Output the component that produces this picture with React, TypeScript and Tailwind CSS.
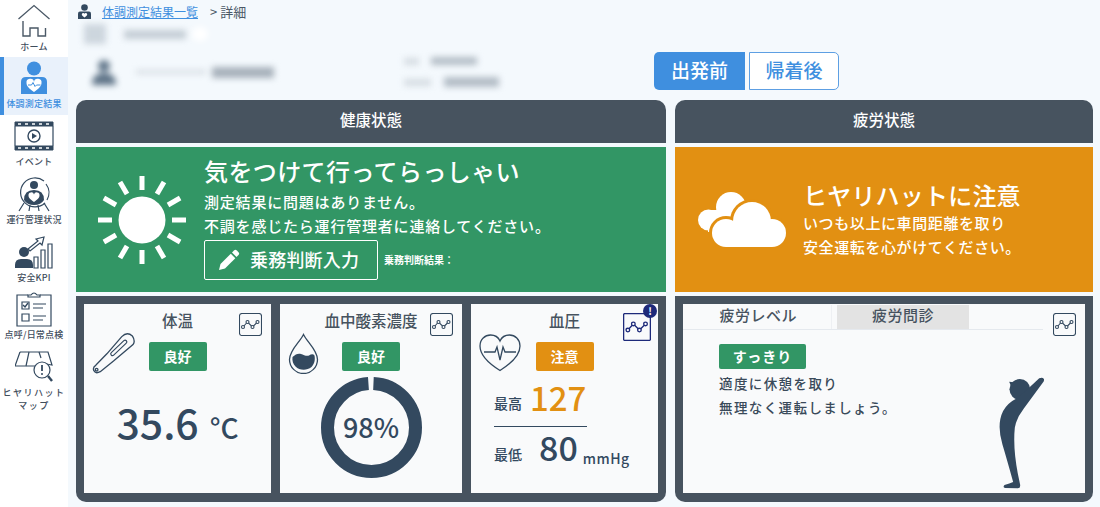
import React from 'react';

const font = { fontFamily: '"Noto Sans CJK JP", "Noto Sans", sans-serif' };

function HomeIcon() {
  return (
    <svg width="34" height="34" viewBox="0 0 34 34" fill="none" stroke="#4a5866" strokeWidth="1.3">
      <path d="M1.500 15 17 1.500 32.500 15" />
      <path d="M6 17v15h7v-8h8v8h7.500v-8" strokeWidth="1.400" />
    </svg>
  );
}

function HealthIcon() {
  return (
    <svg width="28" height="34" viewBox="0 0 28 34">
      <circle cx="14" cy="7.500" r="7" fill="#3f8fdf" />
      <path d="M1 33V21q0-5 5-5h16q5 0 5 5v12z" fill="#3f8fdf" />
      <path d="M14 31c-5-3.500-7.500-6-7.500-9a3.700 3.700 0 0 1 7.500-1 3.700 3.700 0 0 1 7.500 1c0 3-2.500 5.500-7.500 9z" fill="#fff" />
      <path d="M8 24h3.500l1.500-2.500 2 4 1.500-1.500h4" fill="none" stroke="#3f8fdf" strokeWidth="1" />
    </svg>
  );
}

function EventIcon() {
  return (
    <svg width="40" height="30" viewBox="0 0 40 30" fill="none" stroke="#33495f">
      <path d="M1 1h38v4H1zM1 25h38v4H1z" fill="#33495f" />
      <path d="M4 3h3M11 3h3M18 3h3M25 3h3M32 3h3M4 27h3M11 27h3M18 27h3M25 27h3M32 27h3" stroke="#fff" strokeWidth="1.600" />
      <path d="M1 5v20M39 5v20" strokeWidth="1.200" />
      <circle cx="20" cy="15" r="6" strokeWidth="1.400" />
      <path d="M18 12l5 3-5 3z" fill="#33495f" stroke="none" />
    </svg>
  );
}

function OperationIcon() {
  return (
    <svg width="36" height="36" viewBox="0 0 36 36" fill="none" stroke="#33495f">
      <path d="M28 5a14.500 14.500 0 1 0 1 22" strokeWidth="1.200" />
      <path d="M30 8a14.500 14.500 0 0 1 1 16" strokeWidth="1.200" />
      <circle cx="18" cy="9" r="4" fill="#33495f" stroke="none" />
      <path d="M8 24q0-10 10-10t10 10q-3 5-10 5t-10-5z" fill="#33495f" stroke="none" />
      <path d="M18 26c-4-3-5.500-4.500-5.500-6.500a2.800 2.800 0 0 1 5.500-1 2.800 2.800 0 0 1 5.500 1c0 2-1.500 3.500-5.500 6.500z" fill="#fff" stroke="none" />
      <path d="M3 35l5-8M33 35l-5-8M13 35l1-6M23 35l-1-6" strokeWidth="1.200" />
    </svg>
  );
}

function KpiIcon() {
  return (
    <svg width="38" height="34" viewBox="0 0 38 34" fill="none" stroke="#33495f" strokeWidth="1.200">
      <circle cx="9" cy="17" r="5" fill="#33495f" stroke="none" />
      <path d="M0 33v-3q0-6 6-6h6q6 0 6 6v3z" fill="#33495f" stroke="none" />
      <path d="M19 22h4v11h-4zM26 15h4v18h-4zM33 9h4v24h-4z" />
      <path d="M13 14l10-8-2-2 8-2-2 8-2-2-10 8z" />
    </svg>
  );
}

function CheckIcon() {
  return (
    <svg width="36" height="36" viewBox="0 0 36 36" fill="none" stroke="#33495f" strokeWidth="1.200">
      <path d="M12 4H1v31h34V4H24" />
      <path d="M12 6V4h3q3-4 6 0h3v2z" />
      <path d="M6 11h7v7H6zM6 23h7v7H6z" />
      <path d="M7 14l2 2 3-4" strokeWidth="1.400" />
      <path d="M17 13h13M17 17h10M17 25h13M17 29h10" />
    </svg>
  );
}

function MapIcon() {
  return (
    <svg width="38" height="32" viewBox="0 0 38 32" fill="none" stroke="#33495f" strokeWidth="1.200">
      <path d="M5 1h28l4 13-6-1M21 15H0L5 1" />
      <path d="M14 1l-3 14M24 1l2 6" />
      <circle cx="27" cy="19" r="8" fill="#fff" />
      <path d="M27 14v6" strokeWidth="1.800" />
      <circle cx="27" cy="23" r="1" fill="#33495f" stroke="none" />
      <path d="M33 25l4 5" strokeWidth="2.400" />
    </svg>
  );
}

function SideItem({ icon, label, active, className }: { icon: React.ReactNode; label: React.ReactNode; active?: boolean; className: string }) {
  return (
    <div className={`flex flex-col items-center ${className} ${active ? 'bg-[#e9f1fb] border-l-4 border-[#3f8fdf] pr-1' : ''}`}>
      <div className="flex h-[36px] items-center justify-center">{icon}</div>
      <div className={`mt-[1px] text-center text-[9px] font-medium leading-[13px] tracking-[0.2px] ${active ? 'text-[#3f8fdf]' : 'text-[#3f4d5c]'}`}>{label}</div>
    </div>
  );
}

function Sidebar() {
  return (
    <aside className="flex w-[68px] shrink-0 flex-col bg-white">
      <SideItem className="h-[57px] pt-[3px]" icon={<HomeIcon />} label="ホーム" />
      <SideItem className="h-[58px] pt-[3px]" active icon={<HealthIcon />} label="体調測定結果" />
      <SideItem className="h-[55px] pt-[3px]" icon={<EventIcon />} label="イベント" />
      <SideItem className="h-[58px] pt-[6px]" icon={<OperationIcon />} label="運行管理状況" />
      <SideItem className="h-[58px] pt-[6px]" icon={<KpiIcon />} label="安全KPI" />
      <SideItem className="h-[58px] pt-[5px]" icon={<CheckIcon />} label="点呼/日常点検" />
      <SideItem className="h-[70px] pt-[5px]" icon={<MapIcon />} label={<span className="tracking-[1.5px]">ヒヤリハット<br />マップ</span>} />
    </aside>
  );
}

function BlurredInfo() {
  return (
    <div className="mt-[2px] blur-[3px]">
      <div className="flex items-center">
        <div className="ml-[8px] h-[20px] w-[22px] bg-[#cdd6de]" />
        <div className="ml-[18px] h-[9px] w-[62px] bg-[#c4cdd5]" />
        <div className="ml-[6px] h-[14px] w-[16px] rounded-full bg-white" />
      </div>
      <div className="mt-[13px] flex items-center">
        <svg className="ml-[14px]" width="28" height="28" viewBox="0 0 28 28">
          <circle cx="14" cy="8" r="6" fill="#5f7488" />
          <path d="M2 27q0-12 12-12t12 12z" fill="#5f7488" />
        </svg>
        <div className="ml-[18px] h-[4px] w-[70px] bg-[#d5dce2]" />
        <div className="ml-[6px] h-[11px] w-[62px] bg-[#a7b1bb]" />
        <div className="ml-[130px] flex flex-col gap-[12px]">
          <div className="flex items-center gap-[12px]">
            <div className="h-[7px] w-[15px] bg-[#d5dce2]" />
            <div className="h-[8px] w-[46px] bg-[#b3bdc6]" />
          </div>
          <div className="flex items-center gap-[13px]">
            <div className="h-[7px] w-[27px] bg-[#d5dce2]" />
            <div className="h-[10px] w-[55px] bg-[#b3bdc6]" />
          </div>
        </div>
      </div>
    </div>
  );
}

function TopBar() {
  return (
    <div className="flex h-[100px] shrink-0">
      <div className="w-[578px] shrink-0">
        <div className="flex h-[22px] items-center pt-[1px] pl-[2px] text-[12px]">
          <svg className="-mt-[1px]" width="13" height="15" viewBox="0 0 13 15">
            <circle cx="6.500" cy="3.500" r="3.300" fill="#33495f" />
            <path d="M0 15V9.500q0-2 2-2h9q2 0 2 2V15z" fill="#33495f" />
            <path d="M6.500 13.500c-2-1.500-2.700-2.300-2.700-3.300a1.400 1.400 0 0 1 2.700-.4 1.400 1.400 0 0 1 2.700.4c0 1-.7 1.800-2.700 3.300z" fill="#fff" />
          </svg>
          <span className="ml-[11px] text-[#3f8fdf] underline">体調測定結果一覧</span>
          <span className="ml-[12px] text-[13px] text-[#4a5866]">&gt; 詳細</span>
        </div>
        <BlurredInfo />
      </div>
      <div className="flex items-start gap-[4px] pt-[52px]">
        <div className="flex h-[38px] w-[91px] items-center justify-center rounded-l-[5px] bg-[#3f8fdf] pb-[2px] text-[19px] font-medium text-white">出発前</div>
        <div className="flex h-[38px] w-[90px] items-center justify-center rounded-r-[5px] border-[1.5px] border-[#5d9fe3] bg-white pb-[2px] text-[19px] font-medium text-[#3f8fdf]">帰着後</div>
      </div>
    </div>
  );
}

function SunIcon() {
  const rays = Array.from({ length: 12 }, (_, i) => i * 30);
  return (
    <svg width="90" height="90" viewBox="0 0 90 90" fill="#fff">
      <circle cx="45" cy="45" r="23.500" />
      {rays.map((deg) => (
        <rect key={deg} x="42.500" y="1" width="5" height="14" transform={`rotate(${deg} 45 45)`} />
      ))}
    </svg>
  );
}

function CloudIcon() {
  return (
    <svg width="90" height="56" viewBox="0 0 90 56">
      <g fill="#fff">
        <circle cx="10.500" cy="28" r="10.500" />
        <circle cx="33" cy="15" r="15" />
        <rect x="10" y="18" width="30" height="22" />
      </g>
      <g fill="#e29012">
        <circle cx="28" cy="41" r="17" />
        <circle cx="54" cy="29" r="22" />
        <circle cx="74" cy="41" r="17" />
      </g>
      <g fill="#fff">
        <circle cx="28" cy="41" r="14" />
        <circle cx="54" cy="29" r="19" />
        <circle cx="74" cy="41" r="14" />
        <rect x="28" y="36" width="46" height="19" />
      </g>
    </svg>
  );
}

function PencilIcon() {
  return (
    <svg width="22" height="22" viewBox="0 0 22 22" fill="#fff">
      <path d="M16 1.500a2 2 0 0 1 2.800 0l1.700 1.700a2 2 0 0 1 0 2.800L18.500 8 14 3.500z" />
      <path d="M12.800 4.700l4.500 4.500L7 19.500l-6 1.500 1.500-6z" />
    </svg>
  );
}

function ChartIcon({ alert }: { alert?: boolean }) {
  const color = alert ? '#1e2a7a' : '#33495f';
  return (
    <div className={`absolute ${alert ? 'top-[9px] right-[7px]' : 'top-[9px] right-[9px]'}`}>
      <svg width={alert ? 28 : 23} height={alert ? 28 : 23} viewBox="0 0 23 23" fill="none" stroke={color} strokeWidth="1.100">
        <rect x="0.500" y="0.500" width="22" height="22" rx={alert ? 1 : 2.500} />
        <path d="M4 14l4.500-5 5 5 5-5" />
        <circle cx="4" cy="14" r="1.500" fill="#fff" />
        <circle cx="8.500" cy="9" r="1.500" fill="#fff" />
        <circle cx="13.500" cy="14" r="1.500" fill="#fff" />
        <circle cx="18.500" cy="9" r="1.500" fill="#fff" />
      </svg>
      {alert && (
        <div className="absolute -top-[9px] -right-[6px] flex h-[14px] w-[14px] items-center justify-center rounded-full bg-[#1e2a7a] text-[10px] font-bold leading-none text-white">!</div>
      )}
    </div>
  );
}

function Badge({ tone, children }: { tone: 'green' | 'orange'; children: React.ReactNode }) {
  return (
    <div className={`mt-[11px] flex h-[29px] w-[58px] items-center justify-center rounded-[2px] text-[14px] font-bold text-white ${tone === 'green' ? 'bg-[#329665]' : 'bg-[#e29012]'}`}>
      {children}
    </div>
  );
}

function Thermometer() {
  return (
    <svg className="absolute top-[28px] left-[8px]" width="43" height="43" viewBox="50 112 130 130" fill="none" stroke="#33495f" strokeWidth="4" strokeLinecap="round">
      <path d="M140 126Q156 110 172 124Q182 140 174 150L115 200L75 232Q60 240 55 228Q52 218 62 212L95 178z" />
      <path d="M150 142L112 178" strokeWidth="14" />
      <path d="M150 142L112 178" stroke="#f9fafb" strokeWidth="7" />
      <circle cx="64" cy="226" r="4" />
    </svg>
  );
}

function Drop() {
  return (
    <svg className="absolute top-[29px] left-[8px]" width="31" height="41" viewBox="0 0 31 41" fill="none">
      <path d="M15.500 1.500C12 9 1.500 17 1.500 26.500a14 14 0 0 0 28 0C29.500 17 19 9 15.500 1.500z" stroke="#33495f" strokeWidth="1.300" />
      <path d="M4.500 24c3-3 6-4 8.500-3s6 2.500 8 1.500 4-2 5.500 0c1 5-.5 9-3 11.500-5 4-12 3.500-16-.5-2.500-2.500-3.500-5.500-3-9.500z" fill="#33495f" />
    </svg>
  );
}

function Heart() {
  return (
    <svg className="absolute top-[30px] left-[8px]" width="42" height="38" viewBox="0 0 42 38" fill="none" stroke="#33495f" strokeWidth="1.300">
      <path d="M21 36.500C9 29 1 20 1 12 1 5.500 6 1 11.500 1 16 1 19.500 3.500 21 7c1.500-3.500 5-6 9.500-6C36 1 41 5.500 41 12c0 8-8 17-20 24.500z" />
      <path d="M5 18h11l2-5 3 13 3-13 2 5h11" />
    </svg>
  );
}

function Donut() {
  return (
    <div className="relative mt-[6px] h-[101px] w-[101px]">
      <svg width="101" height="101" viewBox="0 0 101 101" fill="none" className="-rotate-90">
        <circle cx="50.500" cy="50.500" r="44" stroke="#33495f" strokeWidth="13" strokeDasharray="270.900 5.600" strokeDashoffset="-2" />
      </svg>
      <div className="absolute inset-0 flex items-center justify-center text-[27px] font-medium text-[#33495f]">98%</div>
    </div>
  );
}

function Person() {
  return (
    <svg className="absolute right-[40px] bottom-[4px]" width="47" height="112" viewBox="985 248 140 335" fill="#33495f">
      <circle cx="1050" cy="285" r="31" />
      <path d="M1018 262l14 2-8 12z" />
      <path d="M1108 252Q1118 248 1122 254Q1124 260 1118 266L1062 342Q1040 370 1035 400Q1028 470 1050 566Q1054 580 1044 581L1006 580Q998 578 1004 571Q1020 566 1030 562Q1010 490 998 450Q980 390 1000 350Q1012 326 1040 312L1076 282z" />
    </svg>
  );
}

function HealthColumn() {
  return (
    <section className="flex w-[590px] shrink-0 flex-col">
      <div className="flex h-[43px] items-center justify-center rounded-t-[10px] bg-[#47535f] pb-[3px] text-[15.500px] font-medium text-white">健康状態</div>
      <div className="mt-[4px] flex h-[145px] items-center bg-[#329665] pl-[21px] text-white">
        <SunIcon />
        <div className="ml-[17px]">
          <div className="text-[24px] font-medium leading-[24px] tracking-[0.4px]">気をつけて行ってらっしゃい</div>
          <div className="mt-[7px] text-[15px] font-medium leading-[24px] tracking-[0.800px]">
            測定結果に問題はありません。<br />不調を感じたら運行管理者に連絡してください。
          </div>
          <div className="mt-[2px] flex items-center">
            <div className="flex h-[40px] w-[174px] items-center rounded-[2px] border border-white pb-[1px] pl-[13px] text-[18px] font-medium">
              <PencilIcon />
              <span className="ml-[10px] tracking-[0.200px]">乗務判断入力</span>
            </div>
            <span className="mb-[2px] ml-[6px] text-[10px] font-bold">乗務判断結果：</span>
          </div>
        </div>
      </div>
      <div className="mt-[4px] grid h-[206px] grid-cols-[187px_182px_187px] gap-[9px] rounded-b-[10px] bg-[#47535f] pt-[8px] pr-[8px] pb-[9px] pl-[8px] text-[#33495f]">
        <div className="relative flex flex-col items-center bg-[#f9fafb] pt-[6px]">
          <div className="text-[15.500px] font-medium leading-[21px] text-[#47535f]">体温</div>
          <ChartIcon />
          <Thermometer />
          <Badge tone="green">良好</Badge>
          <div className="mt-[20px] flex items-baseline">
            <span className="text-[41px] font-medium leading-[60px]">35.6</span>
            <span className="ml-[11px] text-[28px] font-medium">°C</span>
          </div>
        </div>
        <div className="relative flex flex-col items-center bg-[#f9fafb] pt-[6px]">
          <div className="text-[15.500px] font-medium leading-[21px] text-[#47535f]">血中酸素濃度</div>
          <ChartIcon />
          <Drop />
          <Badge tone="green">良好</Badge>
          <Donut />
        </div>
        <div className="relative flex flex-col bg-[#f9fafb] pt-[6px]">
          <div className="self-center text-[15.500px] font-medium leading-[21px] text-[#47535f]">血圧</div>
          <ChartIcon alert />
          <Heart />
          <div className="self-center">
            <Badge tone="orange">注意</Badge>
          </div>
          <div className="mt-[9px] ml-[23px] flex h-[37px] w-[93px] items-end whitespace-nowrap">
            <span className="mb-[3px] text-[14px] font-medium">最高</span>
            <span className="ml-[8px] text-[33px] font-medium leading-[40px] text-[#e29012]">127</span>
          </div>
          <div className="mt-[9px] ml-[23px] h-px w-[93px] bg-[#33495f]" />
          <div className="-mt-[4px] ml-[23px] flex items-end whitespace-nowrap">
            <span className="mb-[6px] text-[14px] font-medium">最低</span>
            <span className="ml-[17px] text-[34px] font-medium leading-[48px]">80</span>
            <span className="mb-[2px] ml-[5px] text-[14px] font-medium tracking-[0.500px]">mmHg</span>
          </div>
        </div>
      </div>
    </section>
  );
}

function FatigueColumn() {
  return (
    <section className="ml-[9px] flex w-[418px] shrink-0 flex-col">
      <div className="flex h-[43px] items-center justify-center rounded-t-[10px] bg-[#47535f] pb-[3px] text-[15.500px] font-medium text-white">疲労状態</div>
      <div className="mt-[4px] flex h-[145px] items-center bg-[#e29012] pl-[23px] text-white">
        <CloudIcon />
        <div className="ml-[15px]">
          <div className="text-[24px] font-medium leading-[28px] tracking-[0.2px]">ヒヤリハットに注意</div>
          <div className="mt-[2px] text-[15px] font-medium leading-[24px] tracking-[0.600px]">
            いつも以上に車間距離を取り<br />安全運転を心がけてください。
          </div>
        </div>
      </div>
      <div className="mt-[4px] h-[206px] rounded-b-[10px] bg-[#47535f] px-[8px] pt-[8px] pb-[9px]">
        <div className="relative h-full bg-[#f9fafb] text-[#33495f]">
          <div className="flex h-[26px] w-[360px] items-center border-b border-[#e5e9ee] pt-[1px] text-[15px] font-medium tracking-[0.500px] text-[#47535f]">
            <div className="flex h-full w-[149px] items-center justify-end border-r border-[#eef0f3] pr-[34px] pb-[3px]">疲労レベル</div>
            <div className="ml-[5px] flex h-full w-[132px] items-center justify-center bg-[#e3e3e3] pb-[3px]">疲労問診</div>
          </div>
          <ChartIcon />
          <div className="ml-[36px] mt-[14px] flex h-[25px] w-[87px] items-center justify-center rounded-[2px] bg-[#329665] text-[14px] font-bold tracking-[1px] text-white">すっきり</div>
          <div className="ml-[36px] mt-[2px] text-[13.500px] font-medium leading-[24px] tracking-[1.400px] text-[#3a4a5a]">
            適度に休憩を取り<br />無理なく運転しましょう。
          </div>
          <Person />
        </div>
      </div>
    </section>
  );
}

export default function App() {
  return (
    <div className="flex h-[507px] w-[1100px] overflow-hidden bg-[#f4f9fd]" style={font}>
      <Sidebar />
      <main className="flex flex-col pl-[8px]">
        <TopBar />
        <div className="flex">
          <HealthColumn />
          <FatigueColumn />
        </div>
      </main>
    </div>
  );
}
